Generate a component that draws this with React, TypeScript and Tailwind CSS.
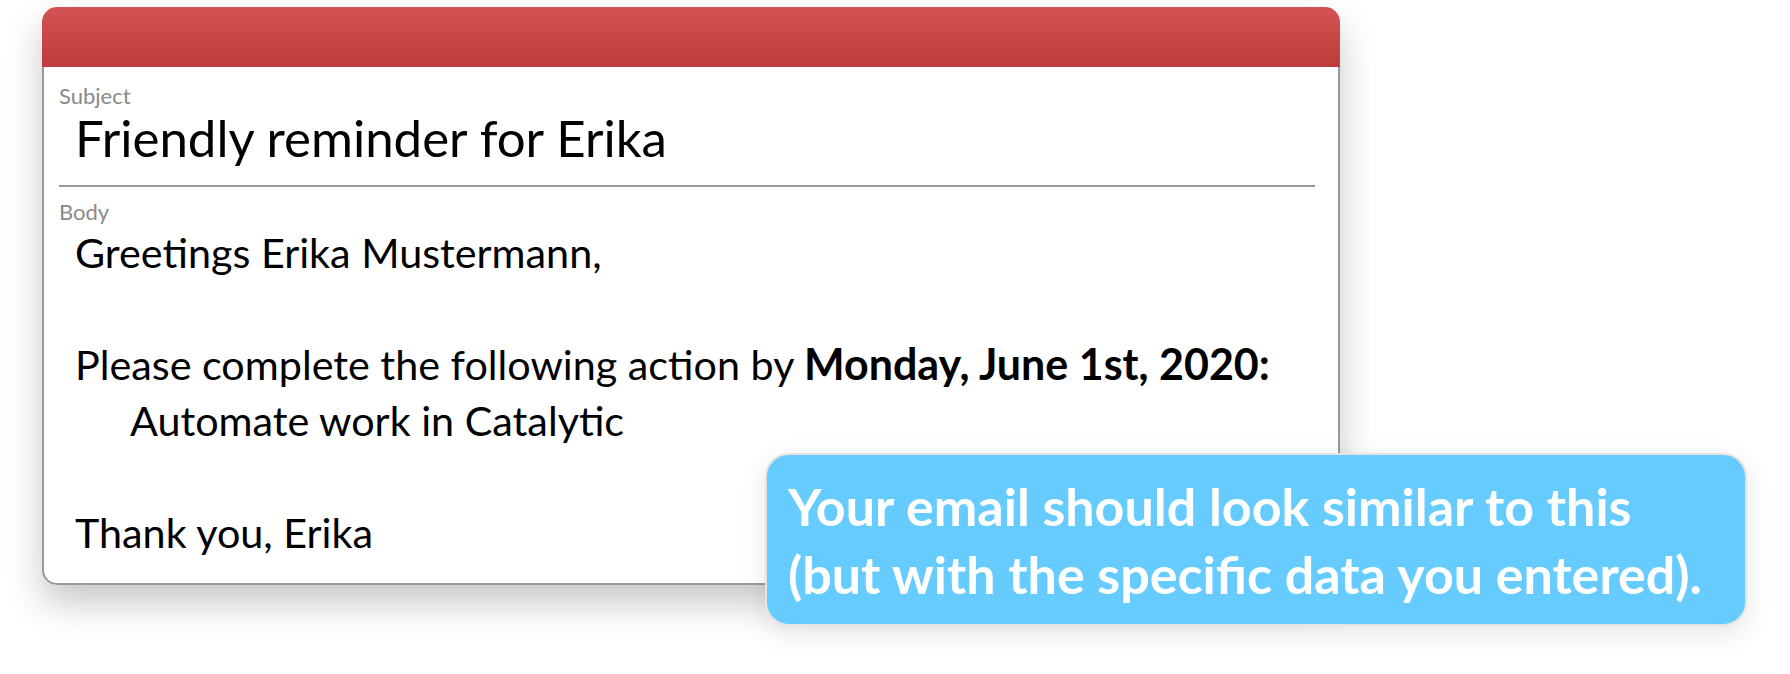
import React from "react";

export default function App() {
  const font = { fontFamily: "Lato, 'Noto Sans', sans-serif" };
  return (
    <div className="relative w-full h-[674px] bg-white overflow-hidden" style={font}>
      <div className="ml-[42px] mt-[7px] w-[1298px] h-[578px] flex flex-col rounded-[15px] bg-white shadow-[0_18px_36px_rgba(0,0,0,0.22)]">
        <div className="h-[60px] shrink-0 rounded-t-[15px] bg-gradient-to-b from-[#d45252] to-[#bc3c3c]" />
        <div className="flex-1 flex flex-col border-x-2 border-b-2 border-[#999] rounded-b-[15px] pl-[15px] pr-[23px]">
          <div className="mt-[17px] pl-0 text-[22px] leading-[24px] text-[#8a8a8a]">Subject</div>
          <div className="mt-[2px] pl-[16px] text-[51px] leading-[56px] text-black">Friendly reminder for Erika</div>
          <div className="mt-[19px] h-[2px] bg-[#999]" />
          <div className="mt-[13px] pl-0 text-[22px] leading-[24px] text-[#8a8a8a]">Body</div>
          <div className="pl-[16px] text-[41.3px] leading-[56px] text-black">
            <div>Greetings Erika Mustermann,</div>
            <div>&nbsp;</div>
            <div>
              Please complete the following action by <span className="font-bold text-[43px]">Monday, June 1st, 2020:</span>
            </div>
            <div className="pl-[55px]">Automate work in Catalytic</div>
            <div>&nbsp;</div>
            <div>Thank you, Erika</div>
          </div>
        </div>
      </div>
      <div className="absolute left-[765px] top-[453px] w-[982px] h-[173px] rounded-[24px] border-2 border-[#e4e4e4] bg-[#66cbff] shadow-[0_8px_28px_rgba(0,0,0,0.1)] pl-[21px] pt-[17px]">
        <div className="text-[52px] leading-[68px] font-bold text-white">
          <div>Your email should look similar to this</div>
          <div>(but with the specific data you entered).</div>
        </div>
      </div>
    </div>
  );
}
